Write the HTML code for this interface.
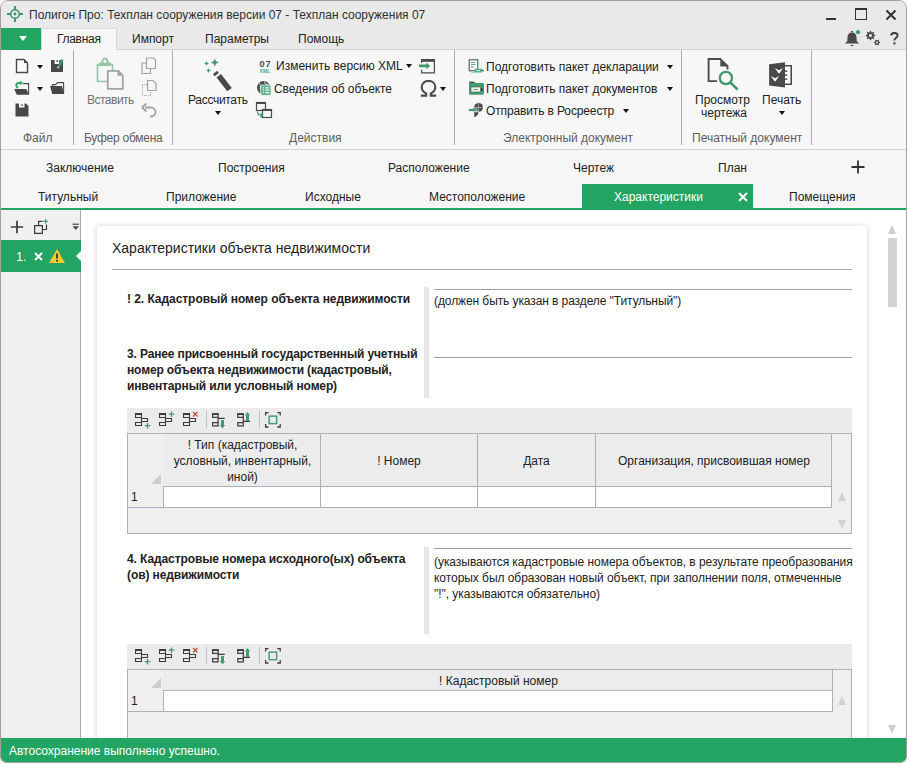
<!DOCTYPE html>
<html><head><meta charset="utf-8">
<style>
*{box-sizing:border-box}
body{margin:0;width:907px;height:763px;overflow:hidden;position:relative;background:#fff;font-family:"Liberation Sans",sans-serif;font-size:12px;color:#222}
.a{position:absolute}
.t{position:absolute;white-space:nowrap;line-height:16px;font-size:12px}
.gl{color:#5e5e5e}
.sep{position:absolute;width:1px;background:#acacb4}
.dd{position:absolute;width:0;height:0;border-left:3px solid transparent;border-right:3px solid transparent;border-top:4px solid #333}
.b{font-weight:bold}
</style></head><body>
<!-- window frame bg -->
<div class="a" style="left:0;top:0;width:907px;height:763px;border:1px solid #a0a0a0;border-radius:8px 8px 6px 6px;overflow:hidden;background:#fff">
  <div class="a" style="left:0;top:0;width:905px;height:48px;background:#e9e9e9"></div>
  <div class="a" style="left:0;top:48px;width:905px;height:1px;background:#d0d0d0"></div>
  <div class="a" style="left:0;top:49px;width:905px;height:100px;background:#f7f7f7;border-bottom:1px solid #d2d2d2"></div>
  <div class="a" style="left:0;top:149px;width:905px;height:58px;background:#f6f6f6"></div>
  <div class="a" style="left:0;top:207px;width:905px;height:2px;background:#22a463"></div>
  <div class="a" style="left:0;top:209px;width:80px;height:528px;background:#f0f0f0;border-right:1px solid #a8a8a8"></div>
  <div class="a" style="left:0;top:737px;width:905px;height:24px;background:#22a463"></div>
</div>

<!-- ===== title bar ===== -->
<svg class="a" style="left:6px;top:5px" width="18" height="18" viewBox="0 0 18 18"><circle cx="9" cy="9" r="4.3" fill="none" stroke="#3b9669" stroke-width="1.6"/><circle cx="9" cy="9" r="1.45" fill="#3b9669"/><path d="M9 1v3.8M9 13.2V17M1 9h3.8M13.2 9H17" stroke="#3b9669" stroke-width="1.9"/></svg>
<div class="t" style="left:29px;top:7px;color:#303030">Полигон Про: Техплан сооружения версии 07 - Техплан сооружения 07</div>
<!-- window buttons -->
<div class="a" style="left:826px;top:18px;width:10px;height:2px;background:#333"></div>
<div class="a" style="left:855px;top:8px;width:12px;height:12px;border:1.2px solid #333;border-top-width:2px"></div>
<svg class="a" style="left:885px;top:9px" width="12" height="12" viewBox="0 0 12 12"><path d="M1.5 1.5L10.5 10.5M10.5 1.5L1.5 10.5" stroke="#333" stroke-width="2"/></svg>
<!-- bell gear help -->
<svg class="a" style="left:844px;top:29px" width="18" height="18" viewBox="0 0 18 18"><path d="M8 3.2c-2.8 0-4.3 2.2-4.5 5L3.3 12 0.8 14.6h14.4L12.7 12l-0.2-3.8C12.3 5.4 10.8 3.2 8 3.2z" fill="#4a4a4a"/><path d="M6.8 16.5h2.4" stroke="#4a4a4a" stroke-width="1.2"/><path d="M7 2.5h2" stroke="#4a4a4a" stroke-width="1"/><circle cx="14" cy="3.2" r="2.1" fill="#3d9b6c"/></svg>
<svg class="a" style="left:865px;top:30px" width="17" height="17" viewBox="0 0 17 17"><path d="M10.28 5.03 L10.28 5.97 L8.75 6.49 L8.50 7.10 L9.21 8.55 L8.55 9.21 L7.10 8.50 L6.49 8.75 L5.97 10.28 L5.03 10.28 L4.51 8.75 L3.90 8.50 L2.45 9.21 L1.79 8.55 L2.50 7.10 L2.25 6.49 L0.72 5.97 L0.72 5.03 L2.25 4.51 L2.50 3.90 L1.79 2.45 L2.45 1.79 L3.90 2.50 L4.51 2.25 L5.03 0.72 L5.97 0.72 L6.49 2.25 L7.10 2.50 L8.55 1.79 L9.21 2.45 L8.50 3.90 L8.75 4.51Z" fill="#4a4a4a"/><circle cx="5.5" cy="5.5" r="1.5" fill="#ebebeb"/><path d="M15.07 12.10 L15.07 12.90 L14.03 13.34 L13.75 13.84 L13.89 14.96 L13.19 15.36 L12.29 14.68 L11.71 14.68 L10.81 15.36 L10.11 14.96 L10.25 13.84 L9.97 13.34 L8.93 12.90 L8.93 12.10 L9.97 11.66 L10.25 11.16 L10.11 10.04 L10.81 9.64 L11.71 10.32 L12.29 10.32 L13.19 9.64 L13.89 10.04 L13.75 11.16 L14.03 11.66Z" fill="#4a4a4a"/><circle cx="12" cy="12.5" r="1" fill="#ebebeb"/></svg>
<svg class="a" style="left:890px;top:32px" width="9" height="13" viewBox="0 0 9 13"><path d="M1.2 3.6C1.2 1.9 2.6 0.9 4.4 0.9S7.6 1.9 7.6 3.6c0 1.3-0.8 1.9-1.8 2.5C4.8 6.7 4.4 7.3 4.4 8.6" fill="none" stroke="#444" stroke-width="2"/><rect x="3.4" y="10.3" width="2.1" height="2.1" fill="#444"/></svg>

<!-- ===== ribbon tabs ===== -->
<div class="a" style="left:1px;top:28px;width:40px;height:22px;background:#22a463"></div>
<div class="a" style="left:19px;top:36px;width:0;height:0;border-left:4px solid transparent;border-right:4px solid transparent;border-top:5px solid #fff"></div>
<div class="a" style="left:41px;top:28px;width:76px;height:22px;background:#f7f7f7;border:1px solid #d9d9d9;border-bottom:none"></div>
<div class="t" style="left:57px;top:31px;letter-spacing:-0.3px">Главная</div>
<div class="t" style="left:132px;top:31px">Импорт</div>
<div class="t" style="left:205px;top:31px">Параметры</div>
<div class="t" style="left:298px;top:31px">Помощь</div>

<!-- ===== ribbon body ===== -->
<div class="sep" style="left:73px;top:50px;height:95px"></div>
<div class="sep" style="left:172px;top:50px;height:95px"></div>
<div class="sep" style="left:454px;top:50px;height:95px"></div>
<div class="sep" style="left:681px;top:50px;height:95px"></div>
<div class="sep" style="left:811px;top:50px;height:95px"></div>
<div class="t gl" style="left:23px;top:130px">Файл</div>
<div class="t gl" style="left:84px;top:130px;letter-spacing:-0.25px">Буфер обмена</div>
<div class="t gl" style="left:503px;top:130px">Электронный документ</div>
<div class="t gl" style="left:692px;top:130px">Печатный документ</div>


<!-- File group icons -->
<svg class="a" style="left:15px;top:58px" width="15" height="16" viewBox="0 0 15 16"><path d="M1.5 1.5h7.5l3.5 3.5v9.5h-11z" fill="#fff" stroke="#474747" stroke-width="1.4"/><path d="M9 1.5v3.5h3.5z" fill="#474747"/></svg>
<div class="dd" style="left:37px;top:65px;border-top-color:#111"></div>
<svg class="a" style="left:50px;top:58px" width="15" height="15" viewBox="0 0 15 15"><path d="M1 2h3.6v4h4.6V2h1.5L13 3.5V14H1z" fill="#474747"/><rect x="6.4" y="2.3" width="1.6" height="1.6" fill="#474747"/><path d="M8.2 9.4L12.6 1.6" stroke="#3aa36a" stroke-width="2"/><path d="M7.6 10.4l0.8-1.6" stroke="#9fd0b5" stroke-width="2"/></svg>
<svg class="a" style="left:13px;top:80px" width="18" height="16" viewBox="0 0 18 16"><path d="M10.1 3.6H15.6V14.6" fill="none" stroke="#474747" stroke-width="1.1"/><path d="M1.2 9.1H13.3L15.9 14.7H3.8z" fill="#474747"/><path d="M4.9 7.9C2.6 6.6 2.6 3.2 5.8 3.1H7.6" fill="none" stroke="#2aa96b" stroke-width="2"/><path d="M7.2 0.6L9.9 3.1 7.2 5.6z" fill="#2aa96b"/></svg>
<div class="dd" style="left:37px;top:87px;border-top-color:#111"></div>
<svg class="a" style="left:50px;top:81px" width="15" height="14" viewBox="0 0 15 14"><path d="M2.4 5.2V3.6H5.6L7.4 1.6H13.6V13" fill="none" stroke="#474747" stroke-width="1.1"/><path d="M0.1 5.1H12L13.9 13.1H2.2z" fill="#474747"/></svg>
<svg class="a" style="left:15px;top:103px" width="14" height="14" viewBox="0 0 14 14"><path d="M0.5 0.5h3.5v4h5.5v-4h1.5l2.5 2.5v10.5H0.5z" fill="#474747"/><rect x="6.3" y="1.3" width="1.5" height="1.5" fill="#474747"/></svg>

<!-- Clipboard group -->
<svg class="a" style="left:96px;top:57px" width="30" height="34" viewBox="0 0 30 34"><path d="M1.5 7.5h15v17h-15z" fill="none" stroke="#92c6a6" stroke-width="1.6"/><rect x="3" y="5.5" width="12" height="3.5" fill="#92c6a6"/><circle cx="9" cy="4.3" r="2.6" fill="#f7f7f7" stroke="#92c6a6" stroke-width="1.8"/><path d="M11.8 13.8h10.5l4.5 4.5v13.5h-15z" fill="#f7f7f7" stroke="#a2a2a2" stroke-width="1.7"/><path d="M21.5 13.8v5h5.3z" fill="#a2a2a2"/></svg>
<div class="t" style="left:87px;top:92px;color:#727272;letter-spacing:-0.5px">Вставить</div>
<svg class="a" style="left:141px;top:57px" width="16" height="18" viewBox="0 0 16 18"><path d="M1 6h8.5v10.5H1z" fill="#f7f7f7" stroke="#a2a2a2" stroke-width="1.2"/><path d="M5.5 1h7l2 2v8.5h-9z" fill="#f7f7f7" stroke="#a2a2a2" stroke-width="1.2"/></svg>
<svg class="a" style="left:141px;top:79px" width="17" height="18" viewBox="0 0 17 18"><path d="M1.5 6v11M1 16.5h9M9.5 13v4" fill="none" stroke="#a8a8a8" stroke-width="1" stroke-dasharray="1 1"/><path d="M1 5.5h5" stroke="#a8a8a8" stroke-width="1" stroke-dasharray="1 1"/><path d="M6.5 1.5h5.5l3 3v7h-8.5z" fill="#f7f7f7" stroke="#a2a2a2" stroke-width="1.2"/></svg>
<svg class="a" style="left:141px;top:102px" width="16" height="17" viewBox="0 0 16 17"><path d="M4 5.5h6a4.5 4.5 0 0 1 0 9h-1" fill="none" stroke="#a2a2a2" stroke-width="1.8"/><path d="M1 5.5L5.5 1.5M1 5.5L5.5 9.5" stroke="#a2a2a2" stroke-width="1.8" fill="none"/></svg>

<!-- Actions group -->
<svg class="a" style="left:202px;top:57px" width="32" height="34" viewBox="0 0 32 34"><path d="M12.8 1.5l1.2 2.8 2.8 1.2-2.8 1.2-1.2 2.8-1.2-2.8-2.8-1.2 2.8-1.2z" fill="#3d9b6c"/><path d="M4.5 4l0.8 1.7 1.7 0.8-1.7 0.8-0.8 1.7-0.8-1.7-1.7-0.8 1.7-0.8z" fill="#3d9b6c"/><path d="M6.5 11l0.8 1.7 1.7 0.8-1.7 0.8-0.8 1.7-0.8-1.7-1.7-0.8 1.7-0.8z" fill="#3d9b6c"/><path d="M11 17l4.3-3.2 1.6 2.2-4.3 3.2z" fill="#4a4a4a"/><path d="M14.5 20.5l4.5-3.4 10.8 13.8-4.5 3.4z" fill="#4a4a4a"/></svg>
<div class="t" style="left:188px;top:92px;letter-spacing:-0.3px">Рассчитать</div>
<div class="dd" style="left:215px;top:111px;border-top-color:#111"></div>
<svg class="a" style="left:258px;top:59px" width="16" height="16" viewBox="0 0 16 16"><text x="1.6" y="7.8" font-family="Liberation Sans" font-size="9.2" font-weight="bold" fill="#4a4a4a" letter-spacing="0.9">07</text><text x="1.6" y="13.6" font-family="Liberation Sans" font-size="5" font-weight="bold" fill="#4fa67c" letter-spacing="0.1">XML</text></svg>
<div class="t" style="left:276px;top:58px">Изменить версию XML</div>
<div class="dd" style="left:405.5px;top:63.5px;border-top-color:#111"></div>
<svg class="a" style="left:256px;top:80px" width="18" height="17" viewBox="0 0 18 17"><circle cx="7.6" cy="7.6" r="6.6" fill="#4a4a4a"/><path d="M3 3.5c2 1 2 3 1 5M9 1.5c-1 2 1 3 3 3" stroke="#f7f7f7" stroke-width="1" fill="none"/><rect x="4.6" y="5" width="10.4" height="10.4" rx="1.6" fill="#5fb08f" stroke="#f7f7f7" stroke-width="0.8"/><path d="M6.8 7.8h1.2M9.2 7.8h4M6.8 10.2h1.2M9.2 10.2h4M6.8 12.6h1.2M9.2 12.6h4" stroke="#eef7f2" stroke-width="1.2"/></svg>
<div class="t" style="left:274px;top:81px;letter-spacing:-0.1px">Сведения об объекте</div>
<svg class="a" style="left:255px;top:101px" width="18" height="18" viewBox="0 0 18 18"><rect x="1.5" y="1.5" width="9" height="8" fill="none" stroke="#4a4a4a" stroke-width="1.2"/><rect x="1" y="1" width="10" height="2" fill="#4a4a4a"/><rect x="7.5" y="8.5" width="9" height="8" fill="#f7f7f7" stroke="#4a4a4a" stroke-width="1.2"/><rect x="7" y="8" width="10" height="2" fill="#4a4a4a"/><path d="M2.5 10.5c0 3 2 4 4.5 4" stroke="#3d9b6c" stroke-width="1.3" fill="none"/><path d="M5.5 12.5l2 2-2 2" stroke="#3d9b6c" stroke-width="1.2" fill="none"/></svg>
<svg class="a" style="left:418px;top:58px" width="18" height="16" viewBox="0 0 18 16"><path d="M3.6 4v-2h12.8v12.8H3.6v-3" fill="none" stroke="#4a4a4a" stroke-width="1.2"/><rect x="3" y="1" width="14" height="2.8" fill="#4a4a4a"/><path d="M3.6 3v2" stroke="#4a4a4a" stroke-width="1.2"/><path d="M1 6.6h7.2V4.6l4 3.3-4 3.3V9.3H1z" fill="#3f9a6b"/></svg>
<svg class="a" style="left:420px;top:80px" width="17" height="17" viewBox="0 0 17 17"><path d="M0.8 15.6h5.4v-2.2C3.4 12.2 1.7 9.9 1.7 7.1 1.7 3.5 4.5 1 8.5 1s6.8 2.5 6.8 6.1c0 2.8-1.7 5.1-4.5 6.3v2.2h5.4" fill="none" stroke="#4a4a4a" stroke-width="2.1"/></svg>
<div class="dd" style="left:440px;top:87px;border-top-color:#111"></div>
<div class="t gl" style="left:289px;top:130px">Действия</div>

<!-- E-doc group -->
<svg class="a" style="left:468px;top:58px" width="17" height="17" viewBox="0 0 17 17"><rect x="1.2" y="1.8" width="8.6" height="11" fill="#f7f7f7" stroke="#555" stroke-width="1.1"/><path d="M3 4.5h4M3 6.5h4.5M3 9h2.5" stroke="#4fae84" stroke-width="1"/><path d="M10.5 3v10" stroke="#9ccfb4" stroke-width="1.2"/><path d="M3 14.3h5" stroke="#9ccfb4" stroke-width="1"/><rect x="6.5" y="10.8" width="8" height="3.6" rx="0.8" fill="#4fae84"/><path d="M8.5 12.6h3.5" stroke="#e6f3ec" stroke-width="0.9"/><path d="M14.5 12.6h1.5" stroke="#555" stroke-width="1.2"/></svg>
<div class="t" style="left:486px;top:59px">Подготовить пакет декларации</div>
<div class="dd" style="left:667px;top:65px;border-top-color:#111"></div>
<svg class="a" style="left:468px;top:80px" width="17" height="16" viewBox="0 0 17 16"><path d="M1 3a1.2 1.2 0 0 1 1.2-1.2h3.6l1.3 1.3h7.7A1.2 1.2 0 0 1 16 4.3v9.3a1.2 1.2 0 0 1-1.2 1.2H2.2A1.2 1.2 0 0 1 1 13.6z" fill="#3f9e6e"/><path d="M1.5 2.2h4.3l1.2 1.2" stroke="#444" stroke-width="1" fill="none"/><rect x="3" y="7" width="9.5" height="5" fill="#eef7f2" stroke="#555" stroke-width="0.6"/><path d="M5 9.5h5" stroke="#777" stroke-width="0.8"/><rect x="13" y="8.3" width="1.6" height="2.6" fill="#333"/></svg>
<div class="t" style="left:486px;top:81px">Подготовить пакет документов</div>
<div class="dd" style="left:667px;top:87px;border-top-color:#111"></div>
<svg class="a" style="left:468px;top:102px" width="17" height="18" viewBox="0 0 17 18"><circle cx="10.6" cy="5.3" r="4.4" fill="#4a4a4a"/><path d="M6.2 10.1h4.3C10.5 12.6 8.7 14.8 6.2 15z" fill="#4a4a4a"/><path d="M10.4 0.5v9.6M6 5.5h9.2" stroke="#a8a8a8" stroke-width="0.9"/><path d="M6 9.8h5" stroke="#f7f7f7" stroke-width="0.7"/><rect x="6.6" y="6.4" width="3" height="3" fill="#7fa892"/><rect x="0.8" y="6.9" width="4.6" height="2.1" fill="#3d9b6c"/><path d="M5 5.8L7.6 7.95 5 10.1z" fill="#3d9b6c"/></svg>
<div class="t" style="left:486px;top:103px;letter-spacing:-0.13px">Отправить в Росреестр</div>
<div class="dd" style="left:623px;top:109px;border-top-color:#111"></div>

<!-- Print group -->
<svg class="a" style="left:706px;top:56px" width="34" height="35" viewBox="0 0 34 35"><path d="M11 25.1H2.6V3h12.6" fill="none" stroke="#4a4a4a" stroke-width="1.9"/><path d="M14.3 2.05L22.4 9.6V13.5h-1.8V10.5h-6.3z" fill="#4a4a4a"/><circle cx="19.9" cy="22" r="6.1" fill="none" stroke="#3e9769" stroke-width="2.3"/><path d="M24.2 26.3l7.4 7.2" stroke="#3e9769" stroke-width="2.5"/></svg>
<div class="t" style="left:695px;top:92px">Просмотр</div>
<div class="t" style="left:701px;top:105px">чертежа</div>
<svg class="a" style="left:768px;top:61px" width="26" height="28" viewBox="0 0 26 28"><path d="M1.1 3.2L17 1.2V26.6L1.1 24.6z" fill="#4a4a4a"/><path d="M17 4.7h6.2v18.6H17" fill="#fff" stroke="#4a4a4a" stroke-width="1.6"/><rect x="17" y="9.4" width="2.3" height="1.4" fill="#4a4a4a"/><rect x="17" y="13.4" width="2.3" height="1.4" fill="#4a4a4a"/><rect x="17" y="17.4" width="2.3" height="1.4" fill="#4a4a4a"/><path d="M6.8 7L11 9.3 15.2 7 11 12.8z" fill="#fff"/><path d="M2.8 15L7 17.3 11.2 15 7 20.8z" fill="#fff"/></svg>
<div class="t" style="left:762px;top:92px">Печать</div>
<div class="dd" style="left:779px;top:111px;border-top-color:#111"></div>


<!-- ===== document tabs ===== -->
<div class="t" style="left:46px;top:160px">Заключение</div>
<div class="t" style="left:218px;top:160px">Построения</div>
<div class="t" style="left:388px;top:160px">Расположение</div>
<div class="t" style="left:573px;top:160px">Чертеж</div>
<div class="t" style="left:718px;top:160px">План</div>
<svg class="a" style="left:851px;top:160px" width="14" height="14" viewBox="0 0 14 14"><path d="M7 0.5v13M0.5 7h13" stroke="#333" stroke-width="1.8"/></svg>
<div class="t" style="left:38px;top:189px">Титульный</div>
<div class="t" style="left:166px;top:189px">Приложение</div>
<div class="t" style="left:305px;top:189px">Исходные</div>
<div class="t" style="left:429px;top:189px">Местоположение</div>
<div class="a" style="left:582px;top:184px;width:171px;height:25px;background:#22a463"></div>
<div class="t" style="left:614px;top:189px;color:#fff">Характеристики</div>
<svg class="a" style="left:738px;top:192px" width="10" height="10" viewBox="0 0 10 10"><path d="M1 1L9 9M9 1L1 9" stroke="#fff" stroke-width="2"/></svg>
<div class="t" style="left:789px;top:189px">Помещения</div>

<!-- ===== left panel ===== -->
<svg class="a" style="left:10px;top:220px" width="14" height="14" viewBox="0 0 14 14"><path d="M7 0.8v12.4M0.8 7h12.4" stroke="#3a3a3a" stroke-width="1.7"/></svg>
<svg class="a" style="left:33px;top:218px" width="16" height="17" viewBox="0 0 16 17"><path d="M1.6 7.6h7.8v7.8H1.6z" fill="none" stroke="#3a3a3a" stroke-width="1.2"/><path d="M5.6 7.6V3.4H9.5M13.5 6.5v5H9.4" fill="none" stroke="#3a3a3a" stroke-width="1.2"/><path d="M12.6 1v4.6M10.3 3.3h4.6" stroke="#3d9b6c" stroke-width="1.2"/></svg>
<svg class="a" style="left:72px;top:223px" width="8" height="8" viewBox="0 0 8 8"><path d="M0.5 1.2h6.5" stroke="#4a4a4a" stroke-width="1.2"/><path d="M0.5 3.3h6.5L3.75 7z" fill="#4a4a4a"/></svg>
<div class="a" style="left:1px;top:240px;width:80px;height:32px;background:#22a463"></div>
<div class="a" style="left:76px;top:250.5px;width:0;height:0;border-top:5.5px solid transparent;border-bottom:5.5px solid transparent;border-right:5px solid #fff"></div>
<div class="t" style="left:16px;top:249px;color:#fff;font-size:12.5px">1.</div>
<svg class="a" style="left:34px;top:252px" width="9" height="9" viewBox="0 0 9 9"><path d="M1 1L8 8M8 1L1 8" stroke="#fff" stroke-width="2"/></svg>
<svg class="a" style="left:48px;top:248px" width="18" height="16" viewBox="0 0 18 16"><path d="M9 1L17 15H1z" fill="#f5c934"/><path d="M9 5.5v5" stroke="#333" stroke-width="1.8"/><rect x="8.1" y="11.8" width="1.8" height="1.8" fill="#333"/></svg>

<div class="a" style="left:0;top:0;width:906px;height:738px;overflow:hidden">
<!-- ===== content ===== -->
<div class="a" style="left:97px;top:226px;width:770px;height:540px;background:#fff;border-radius:3px;box-shadow:0 0 5px 1px rgba(0,0,0,0.13)"></div>
<!-- scrollbar -->
<div class="a" style="left:888px;top:225px;width:0;height:0;border-left:4.5px solid transparent;border-right:4.5px solid transparent;border-bottom:9px solid #cdcdcd"></div>
<div class="a" style="left:888px;top:238px;width:9px;height:69px;background:#d3d3d3"></div>
<div class="a" style="left:888px;top:725px;width:0;height:0;border-left:4.5px solid transparent;border-right:4.5px solid transparent;border-top:9px solid #cdcdcd"></div>

<div class="a" style="left:112px;top:240px;font-size:14px;line-height:16px;white-space:nowrap;color:#222">Характеристики объекта недвижимости</div>
<div class="a" style="left:112px;top:269px;width:740px;height:1px;background:#a9a9b4"></div>

<div class="t b" style="left:127px;top:291px;letter-spacing:-0.05px">! 2. Кадастровый номер объекта недвижимости</div>
<div class="a" style="left:424px;top:287px;width:5px;height:111px;background:#e6e6e6"></div>
<div class="a" style="left:434px;top:289px;width:418px;height:1px;background:#a0a0a0"></div>
<div class="t" style="left:434px;top:293px;letter-spacing:-0.09px">(должен быть указан в разделе "Титульный")</div>

<div class="t b" style="left:127px;top:346px;line-height:16px;letter-spacing:-0.14px">3. Ранее присвоенный государственный учетный<br>номер объекта недвижимости (кадастровый,<br>инвентарный или условный номер)</div>
<div class="a" style="left:434px;top:357px;width:418px;height:1px;background:#a0a0a0"></div>

<!-- table 1 -->
<div class="a" style="left:127px;top:408px;width:725px;height:126px;background:#ebebeb"></div>
<svg class="a" style="left:127px;top:408px" width="160" height="24" viewBox="0 0 160 24"><path d="M8.5 5.5h6v4h-6z" fill="none" stroke="#3c3c3c" stroke-width="1.1"/><rect x="8" y="5" width="7" height="2" fill="#3c3c3c"/><path d="M14.5 10.5h6v3h-6z" fill="none" stroke="#3c3c3c" stroke-width="1.1"/><path d="M8.5 14.5h6v3h-6z" fill="none" stroke="#3c3c3c" stroke-width="1.1"/><path d="M20.5 15v5.5M17.7 17.7h5.6" stroke="#3d9b6c" stroke-width="1.3"/><path d="M32.5 5.5h6v4h-6z" fill="none" stroke="#3c3c3c" stroke-width="1.1"/><rect x="32" y="5" width="7" height="2" fill="#3c3c3c"/><path d="M38.5 10.5h6v3h-6z" fill="none" stroke="#3c3c3c" stroke-width="1.1"/><path d="M32.5 14.5h6v3h-6z" fill="none" stroke="#3c3c3c" stroke-width="1.1"/><path d="M44.5 3.5v5.5M41.7 6.2h5.6" stroke="#3d9b6c" stroke-width="1.3"/><path d="M56.5 5.5h6v4h-6z" fill="none" stroke="#3c3c3c" stroke-width="1.1"/><rect x="56" y="5" width="7" height="2" fill="#3c3c3c"/><path d="M62.5 10.5h6v3h-6z" fill="none" stroke="#3c3c3c" stroke-width="1.1"/><path d="M56.5 14.5h6v3h-6z" fill="none" stroke="#3c3c3c" stroke-width="1.1"/><path d="M66 4l4.5 4.5M70.5 4l-4.5 4.5" stroke="#c0533a" stroke-width="1.3"/><rect x="79" y="3" width="1" height="17" fill="#b7c0cc"/><path d="M85.6 5.8999999999999995h5.5v3.4h-5.5z" fill="none" stroke="#3c3c3c" stroke-width="1.2"/><rect x="85" y="5.3" width="6.7" height="1.7" fill="#3c3c3c"/><path d="M85.6 14.600000000000001h5.5v3.2h-5.5z" fill="none" stroke="#3c3c3c" stroke-width="1.2"/><path d="M91.1 9.3v5.3M91.1 10.399999999999999h6.7" fill="none" stroke="#3c3c3c" stroke-width="1.2"/><rect x="94" y="12.1" width="3" height="5" fill="#3d9b6c"/><path d="M92.8 16.9h5.4l-2.7 3.3z" fill="#3d9b6c"/><path d="M110.8 5.8999999999999995h5.5v3.4h-5.5z" fill="none" stroke="#3c3c3c" stroke-width="1.2"/><rect x="110.2" y="5.3" width="6.7" height="1.7" fill="#3c3c3c"/><path d="M110.8 14.600000000000001h5.5v3.2h-5.5z" fill="none" stroke="#3c3c3c" stroke-width="1.2"/><path d="M116.3 9.3v5.3M116.3 13.399999999999999h6.7" fill="none" stroke="#3c3c3c" stroke-width="1.2"/><rect x="119.0" y="7.3" width="3" height="5.6" fill="#3d9b6c"/><path d="M117.8 7.6h5.4l-2.7-3.6z" fill="#3d9b6c"/><path d="M138.6 7.5V4.6H141.5M150.3 4.6H153.20000000000002V7.5M153.20000000000002 16.1V19.0H150.3M141.5 19.0H138.6V16.1" fill="none" stroke="#3c3c3c" stroke-width="1.3"/><rect x="142.15" y="8.15" width="7.5" height="7.5" fill="none" stroke="#3d9b6c" stroke-width="1.4"/><rect x="132" y="3" width="1" height="17" fill="#b7c0cc"/></svg>
<div class="a" style="left:127px;top:433px;width:725px;height:101px;border:1px solid #b0b0b8;background:#efefef"></div>
<div class="a" style="left:163px;top:434px;width:669px;height:53px;background:#ececec;border-right:1px solid #b0b0b8;border-bottom:1px solid #b0b0b8"></div>
<div class="a" style="left:320px;top:434px;width:1px;height:74px;background:#b0b0b8"></div>
<div class="a" style="left:477px;top:434px;width:1px;height:74px;background:#b0b0b8"></div>
<div class="a" style="left:595px;top:434px;width:1px;height:74px;background:#b0b0b8"></div>
<div class="a" style="left:163px;top:487px;width:669px;height:20px;background:#fff;border-right:1px solid #b0b0b8"></div>
<div class="a" style="left:163px;top:487px;width:1px;height:20px;background:#b0b0b8"></div>
<div class="a" style="left:320px;top:487px;width:1px;height:20px;background:#b0b0b8"></div>
<div class="a" style="left:477px;top:487px;width:1px;height:20px;background:#b0b0b8"></div>
<div class="a" style="left:595px;top:487px;width:1px;height:20px;background:#b0b0b8"></div>
<div class="a" style="left:127px;top:507px;width:705px;height:1px;background:#b0b0b8"></div>
<div class="a" style="left:151px;top:474px;width:0;height:0;border-left:10px solid transparent;border-bottom:10px solid #cdcdcd"></div>
<div class="a" style="left:838px;top:492px;width:0;height:0;border-left:4.5px solid transparent;border-right:4.5px solid transparent;border-bottom:9px solid #d2d2d2"></div>
<div class="a" style="left:838px;top:520px;width:0;height:0;border-left:4.5px solid transparent;border-right:4.5px solid transparent;border-top:9px solid #d2d2d2"></div>
<div class="t" style="left:164px;top:437px;width:157px;text-align:center;white-space:normal">! Тип (кадастровый, условный, инвентарный, иной)</div>
<div class="t" style="left:321px;top:453px;width:156px;text-align:center">! Номер</div>
<div class="t" style="left:478px;top:453px;width:117px;text-align:center">Дата</div>
<div class="t" style="left:596px;top:453px;width:236px;text-align:center">Организация, присвоившая номер</div>
<div class="t" style="left:131px;top:489px">1</div>

<!-- section 4 -->
<div class="t b" style="left:127px;top:551px;letter-spacing:-0.1px">4. Кадастровые номера исходного(ых) объекта<br>(ов) недвижимости</div>
<div class="a" style="left:424px;top:547px;width:5px;height:87px;background:#e6e6e6"></div>
<div class="a" style="left:434px;top:548px;width:418px;height:1px;background:#a0a0a0"></div>
<div class="t" style="left:434px;top:554px;line-height:16px;letter-spacing:-0.05px">(указываются кадастровые номера объектов, в результате преобразования<br>которых был образован новый объект, при заполнении поля, отмеченные<br>"!", указываются обязательно)</div>

<!-- table 2 -->
<div class="a" style="left:127px;top:644px;width:725px;height:100px;background:#ebebeb"></div>
<svg class="a" style="left:127px;top:644px" width="160" height="24" viewBox="0 0 160 24"><path d="M8.5 5.5h6v4h-6z" fill="none" stroke="#3c3c3c" stroke-width="1.1"/><rect x="8" y="5" width="7" height="2" fill="#3c3c3c"/><path d="M14.5 10.5h6v3h-6z" fill="none" stroke="#3c3c3c" stroke-width="1.1"/><path d="M8.5 14.5h6v3h-6z" fill="none" stroke="#3c3c3c" stroke-width="1.1"/><path d="M20.5 15v5.5M17.7 17.7h5.6" stroke="#3d9b6c" stroke-width="1.3"/><path d="M32.5 5.5h6v4h-6z" fill="none" stroke="#3c3c3c" stroke-width="1.1"/><rect x="32" y="5" width="7" height="2" fill="#3c3c3c"/><path d="M38.5 10.5h6v3h-6z" fill="none" stroke="#3c3c3c" stroke-width="1.1"/><path d="M32.5 14.5h6v3h-6z" fill="none" stroke="#3c3c3c" stroke-width="1.1"/><path d="M44.5 3.5v5.5M41.7 6.2h5.6" stroke="#3d9b6c" stroke-width="1.3"/><path d="M56.5 5.5h6v4h-6z" fill="none" stroke="#3c3c3c" stroke-width="1.1"/><rect x="56" y="5" width="7" height="2" fill="#3c3c3c"/><path d="M62.5 10.5h6v3h-6z" fill="none" stroke="#3c3c3c" stroke-width="1.1"/><path d="M56.5 14.5h6v3h-6z" fill="none" stroke="#3c3c3c" stroke-width="1.1"/><path d="M66 4l4.5 4.5M70.5 4l-4.5 4.5" stroke="#c0533a" stroke-width="1.3"/><rect x="79" y="3" width="1" height="17" fill="#b7c0cc"/><path d="M85.6 5.8999999999999995h5.5v3.4h-5.5z" fill="none" stroke="#3c3c3c" stroke-width="1.2"/><rect x="85" y="5.3" width="6.7" height="1.7" fill="#3c3c3c"/><path d="M85.6 14.600000000000001h5.5v3.2h-5.5z" fill="none" stroke="#3c3c3c" stroke-width="1.2"/><path d="M91.1 9.3v5.3M91.1 10.399999999999999h6.7" fill="none" stroke="#3c3c3c" stroke-width="1.2"/><rect x="94" y="12.1" width="3" height="5" fill="#3d9b6c"/><path d="M92.8 16.9h5.4l-2.7 3.3z" fill="#3d9b6c"/><path d="M110.8 5.8999999999999995h5.5v3.4h-5.5z" fill="none" stroke="#3c3c3c" stroke-width="1.2"/><rect x="110.2" y="5.3" width="6.7" height="1.7" fill="#3c3c3c"/><path d="M110.8 14.600000000000001h5.5v3.2h-5.5z" fill="none" stroke="#3c3c3c" stroke-width="1.2"/><path d="M116.3 9.3v5.3M116.3 13.399999999999999h6.7" fill="none" stroke="#3c3c3c" stroke-width="1.2"/><rect x="119.0" y="7.3" width="3" height="5.6" fill="#3d9b6c"/><path d="M117.8 7.6h5.4l-2.7-3.6z" fill="#3d9b6c"/><path d="M138.6 7.5V4.6H141.5M150.3 4.6H153.20000000000002V7.5M153.20000000000002 16.1V19.0H150.3M141.5 19.0H138.6V16.1" fill="none" stroke="#3c3c3c" stroke-width="1.3"/><rect x="142.15" y="8.15" width="7.5" height="7.5" fill="none" stroke="#3d9b6c" stroke-width="1.4"/><rect x="132" y="3" width="1" height="17" fill="#b7c0cc"/></svg>
<div class="a" style="left:127px;top:669px;width:725px;height:90px;border:1px solid #b0b0b8;background:#efefef"></div>
<div class="a" style="left:163px;top:670px;width:670px;height:21px;background:#ececec;border-right:1px solid #b0b0b8;border-bottom:1px solid #b0b0b8"></div>
<div class="a" style="left:163px;top:691px;width:670px;height:20px;background:#fff;border-right:1px solid #b0b0b8"></div>
<div class="a" style="left:163px;top:691px;width:1px;height:20px;background:#b0b0b8"></div>
<div class="a" style="left:127px;top:711px;width:706px;height:1px;background:#b0b0b8"></div>
<div class="a" style="left:151px;top:678px;width:0;height:0;border-left:10px solid transparent;border-bottom:10px solid #cdcdcd"></div>
<div class="a" style="left:838px;top:696px;width:0;height:0;border-left:4.5px solid transparent;border-right:4.5px solid transparent;border-bottom:9px solid #d2d2d2"></div>
<div class="t" style="left:164px;top:673px;width:669px;text-align:center">! Кадастровый номер</div>
<div class="t" style="left:131px;top:693px">1</div>
</div>
<!-- status bar -->
<div class="t" style="left:9px;top:743px;color:#fff">Автосохранение выполнено успешно.</div>

</body></html>
